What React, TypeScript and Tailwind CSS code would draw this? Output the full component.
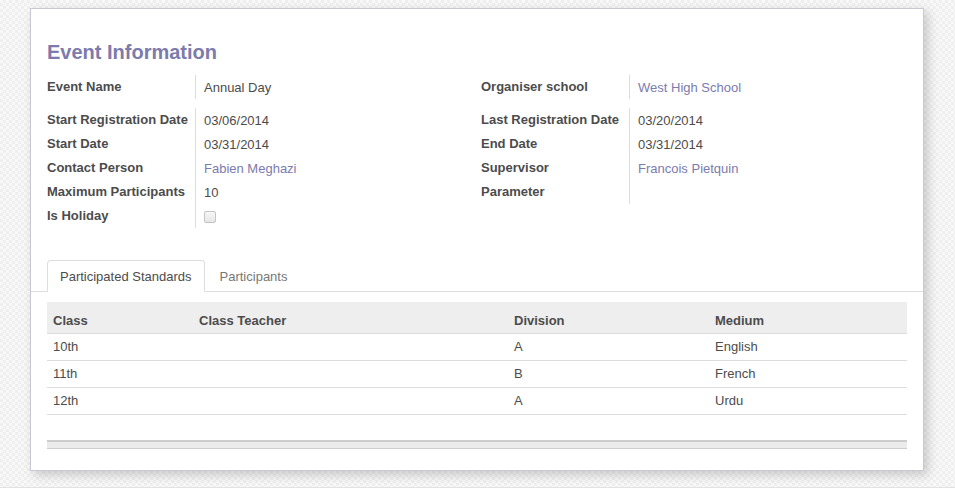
import React from "react";

const Label = ({ children }: { children?: React.ReactNode }) => (
  <div className="h-6 border-r border-[#dcdcdc] pr-2 text-[13px] font-bold leading-[24px] text-[#4c4c4c] whitespace-nowrap">
    {children}
  </div>
);

const Value = ({ children, link }: { children?: React.ReactNode; link?: boolean }) => (
  <div className={`h-6 pl-2 text-[13px] leading-[25px] ${link ? "text-[#7c7bad]" : "text-[#4c4c4c]"}`}>
    {children}
  </div>
);

const rows = [
  { c: "10th", t: "", d: "A", m: "English" },
  { c: "11th", t: "", d: "B", m: "French" },
  { c: "12th", t: "", d: "A", m: "Urdu" },
];

export default function App() {
  return (
    <div className="font-['Liberation_Sans',Arial,sans-serif] bg-white min-h-[499px]">
      <div className="h-[488px] border-b border-[#e2e2e2] bg-[#f4f4f4] bg-[repeating-conic-gradient(#efefef_0_25%,#f8f8f8_0_50%)] bg-[length:6px_6px] pt-[8px] pl-[30px]">
        <div className="w-[894px] h-[463px] bg-white border border-[#c9c9d4] shadow-[4px_4px_10px_rgba(0,0,0,0.18)]">
          <div className="pl-4 pr-[15px] pt-[32px]">
            <h1 className="text-[20px] font-bold leading-[22px] text-[#7c7bad]">Event Information</h1>
            <div className="mt-[12px] grid grid-cols-[434px_1fr]">
              <div>
                <div className="grid grid-cols-[149px_1fr]">
                  <Label>Event Name</Label>
                  <Value>Annual Day</Value>
                </div>
                <div className="mt-[9px] grid grid-cols-[149px_1fr]">
                  <Label>Start Registration Date</Label>
                  <Value>03/06/2014</Value>
                  <Label>Start Date</Label>
                  <Value>03/31/2014</Value>
                  <Label>Contact Person</Label>
                  <Value link>Fabien Meghazi</Value>
                  <Label>Maximum Participants</Label>
                  <Value>10</Value>
                  <Label>Is Holiday</Label>
                  <div className="h-6 pl-2 flex items-center">
                    <div className="w-3 h-3 mt-[1px] rounded-[2px] border border-[#c4c4c4] bg-gradient-to-b from-[#f7f7f7] to-[#e6e6e6]" />
                  </div>
                </div>
              </div>
              <div>
                <div className="grid grid-cols-[149px_1fr]">
                  <Label>Organiser school</Label>
                  <Value link>West High School</Value>
                </div>
                <div className="mt-[9px] grid grid-cols-[149px_1fr]">
                  <Label>Last Registration Date</Label>
                  <Value>03/20/2014</Value>
                  <Label>End Date</Label>
                  <Value>03/31/2014</Value>
                  <Label>Supervisor</Label>
                  <Value link>Francois Pietquin</Value>
                  <Label>Parameter</Label>
                  <Value></Value>
                </div>
              </div>
            </div>
          </div>

          <div className="mt-[32px] flex border-b border-[#dddddd] pl-4 text-[13px]">
            <div className="-mb-px rounded-t-[4px] border border-[#dddddd] border-b-white bg-white px-3 h-[32px] leading-[31px] text-[#4c4c4c]">
              Participated Standards
            </div>
            <div className="-mb-px ml-[2px] border border-transparent px-3 h-[32px] leading-[31px] text-[#777777]">
              Participants
            </div>
          </div>

          <div className="pl-4 pr-[15px] pt-[10px]">
            <table className="w-[860px] table-fixed border-collapse text-[13px] text-[#4c4c4c]">
              <colgroup>
                <col className="w-[146px]" />
                <col className="w-[315px]" />
                <col className="w-[201px]" />
                <col />
              </colgroup>
              <thead>
                <tr className="bg-[#eeeeee] border-b border-[#dddddd]">
                  <th className="h-[31px] px-[6px] pt-[6px] text-left font-bold">Class</th>
                  <th className="px-[6px] pt-[6px] text-left font-bold">Class Teacher</th>
                  <th className="px-[6px] pt-[6px] text-left font-bold">Division</th>
                  <th className="px-[6px] pt-[6px] text-left font-bold">Medium</th>
                </tr>
              </thead>
              <tbody>
                {rows.map((r) => (
                  <tr key={r.c} className="border-b border-[#dddddd]">
                    <td className="h-[27px] px-[6px] pt-[1px]">{r.c}</td>
                    <td className="px-[6px] pt-[1px]">{r.t}</td>
                    <td className="px-[6px] pt-[1px]">{r.d}</td>
                    <td className="px-[6px] pt-[1px]">{r.m}</td>
                  </tr>
                ))}
              </tbody>
            </table>
            <div className="mt-[25px] h-[9px] w-[860px] border-t-2 border-b border-t-[#cccccc] border-b-[#cccccc] bg-[#ebebeb]" />
          </div>
        </div>
      </div>
    </div>
  );
}
